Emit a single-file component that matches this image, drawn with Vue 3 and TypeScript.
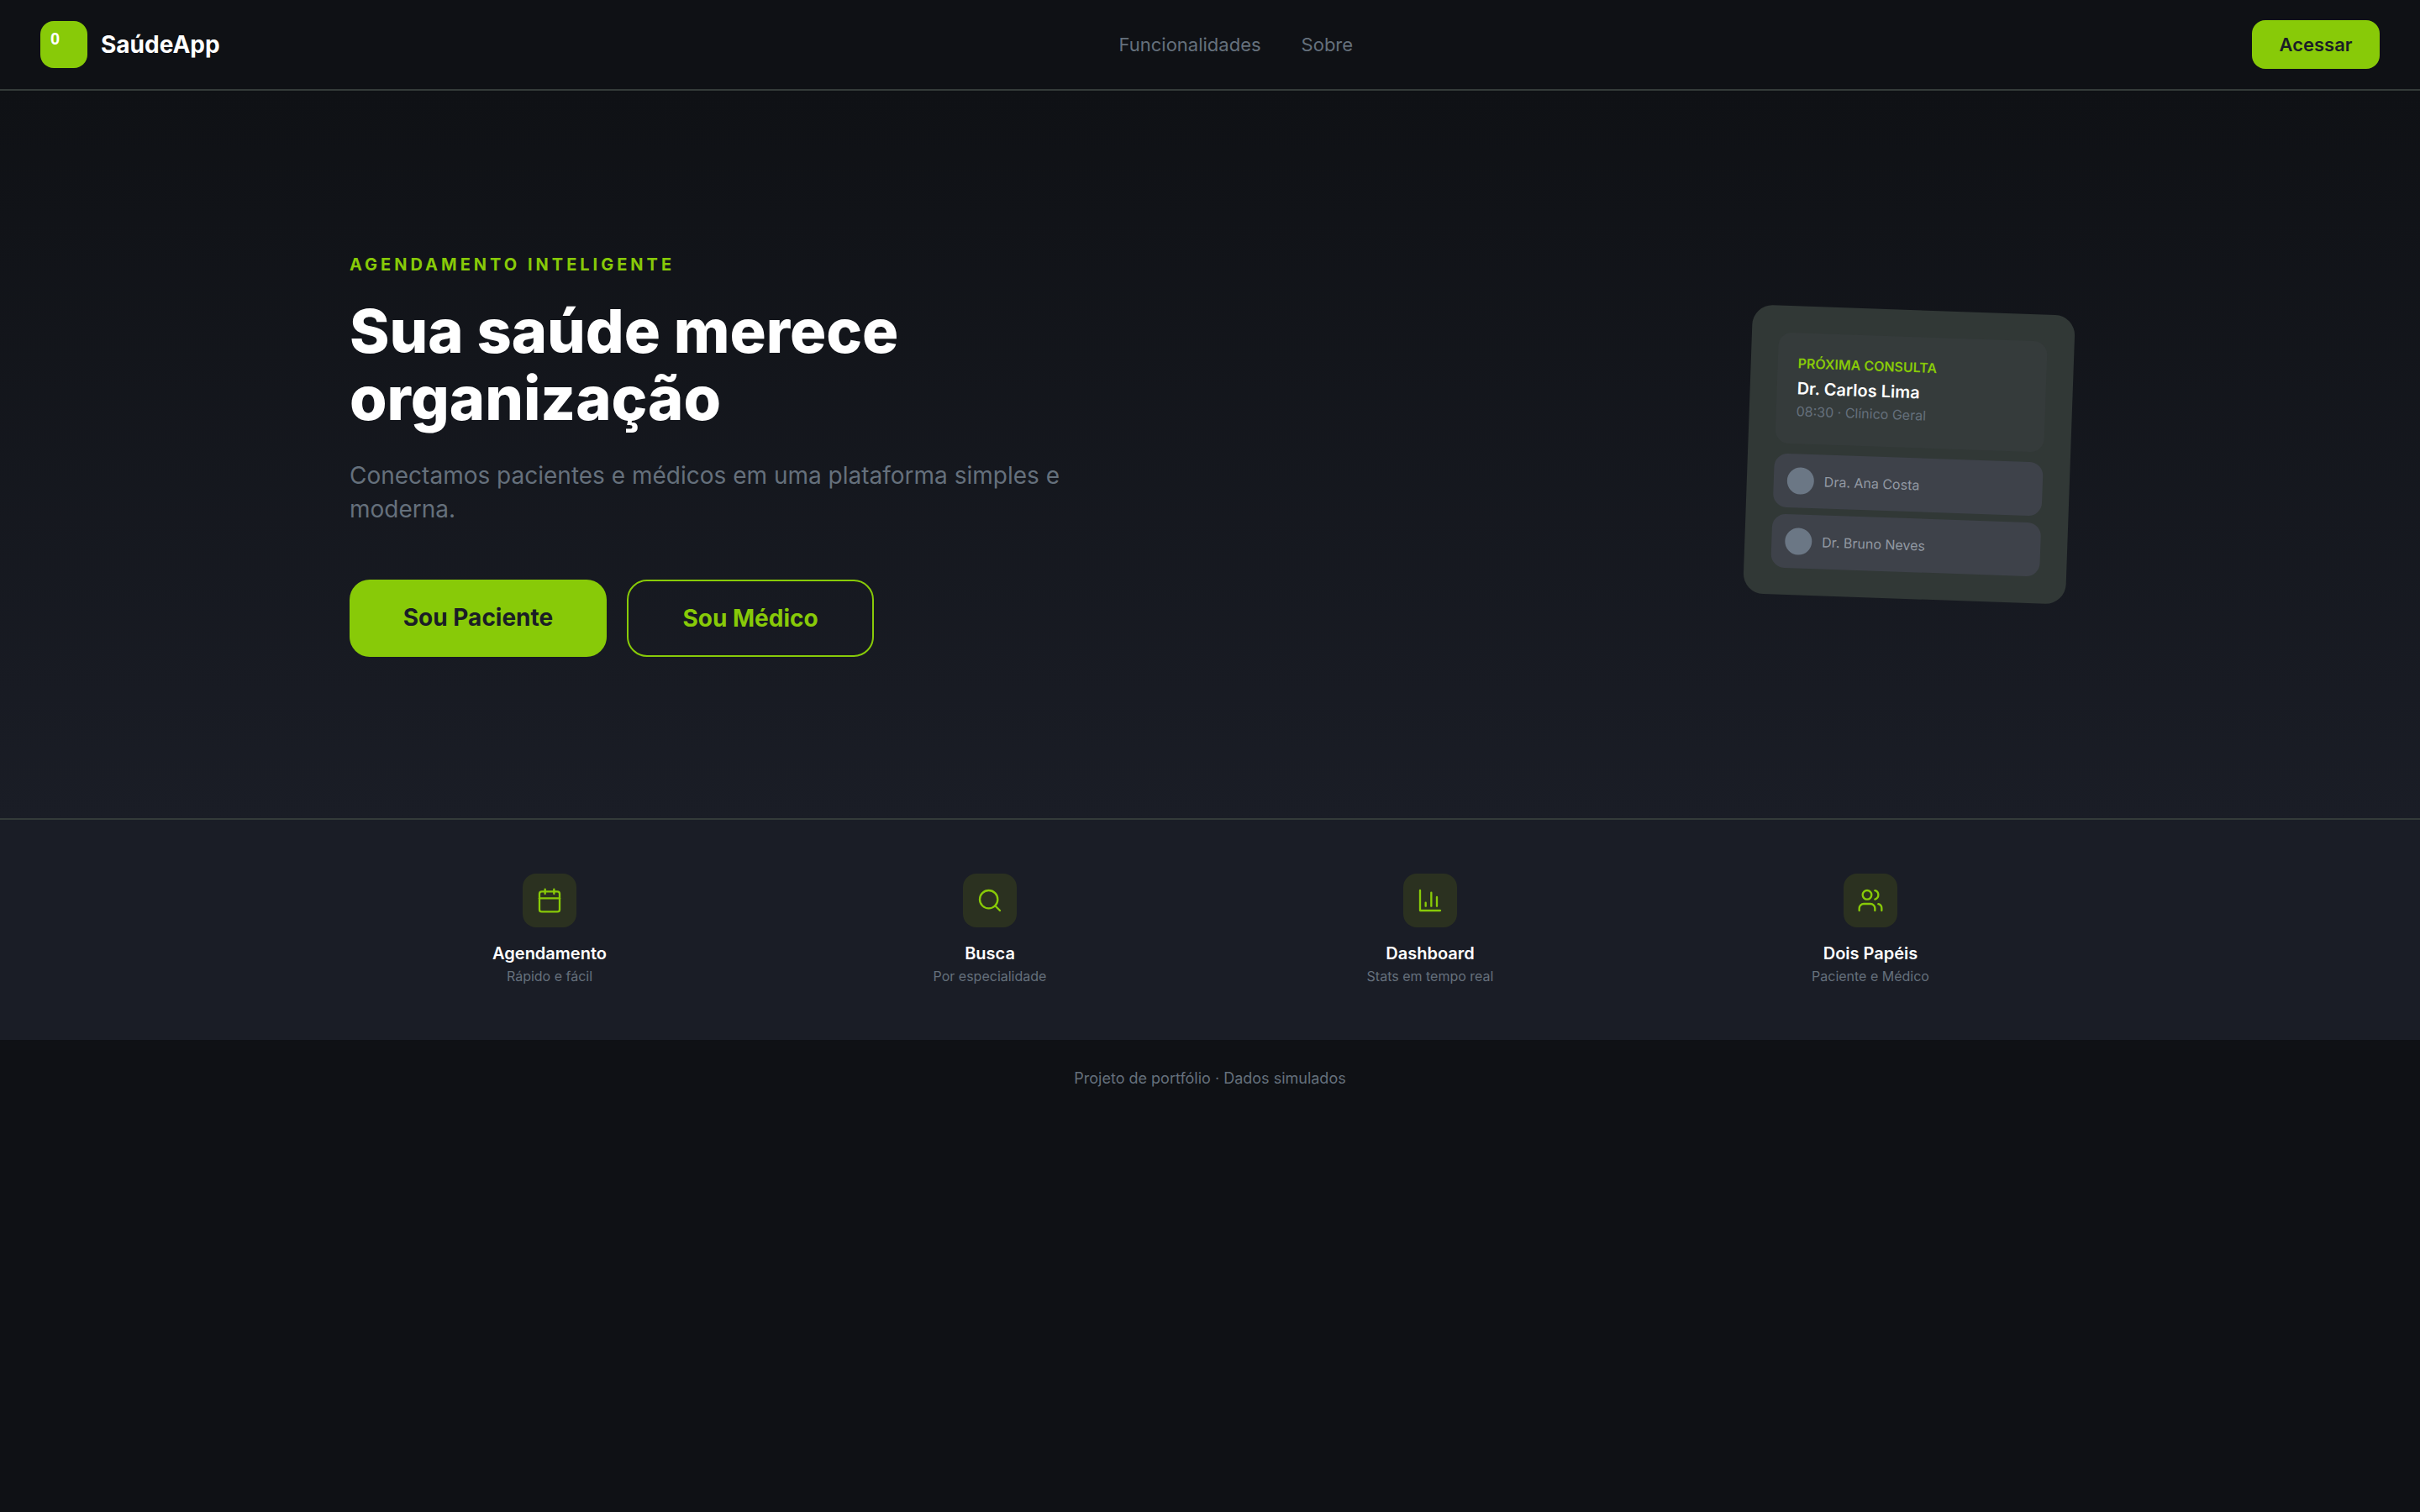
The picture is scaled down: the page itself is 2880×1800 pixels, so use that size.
<script setup lang="ts">
type Feature = {
  title: string
  text: string
  paths: string[]
}

const features: Feature[] = [
  {
    title: 'Agendamento',
    text: 'Rápido e fácil',
    paths: ['M8 2v4', 'M16 2v4', 'M5 4h14a2 2 0 0 1 2 2v14a2 2 0 0 1-2 2H5a2 2 0 0 1-2-2V6a2 2 0 0 1 2-2z', 'M3 10h18'],
  },
  {
    title: 'Busca',
    text: 'Por especialidade',
    paths: ['M19 11a8 8 0 1 1-16 0 8 8 0 0 1 16 0z', 'm21 21-4.3-4.3'],
  },
  {
    title: 'Dashboard',
    text: 'Stats em tempo real',
    paths: ['M3 3v18h18', 'M18 17V9', 'M13 17V5', 'M8 17v-3'],
  },
  {
    title: 'Dois Papéis',
    text: 'Paciente e Médico',
    paths: [
      'M16 21v-2a4 4 0 0 0-4-4H6a4 4 0 0 0-4 4v2',
      'M13 7a4 4 0 1 1-8 0 4 4 0 0 1 8 0z',
      'M22 21v-2a4 4 0 0 0-3-3.87',
      'M16 3.13a4 4 0 0 1 0 7.75',
    ],
  },
]

const doctors = ['Dra. Ana Costa', 'Dr. Bruno Neves']
</script>

<template>
  <div class="page">
    <header class="topbar">
      <div class="brand">
        <span class="brand-mark">0</span>
        <span class="brand-name">SaúdeApp</span>
      </div>
      <nav class="nav">
        <a>Funcionalidades</a>
        <a>Sobre</a>
      </nav>
      <button type="button" class="access-btn">Acessar</button>
    </header>

    <section class="hero">
      <div class="hero-inner">
        <div class="hero-copy">
          <p class="eyebrow">AGENDAMENTO INTELIGENTE</p>
          <h1>Sua saúde merece organização</h1>
          <p class="lead">Conectamos pacientes e médicos em uma plataforma simples e moderna.</p>
          <div class="hero-actions">
            <button type="button" class="btn btn-primary">Sou Paciente</button>
            <button type="button" class="btn btn-outline">Sou Médico</button>
          </div>
        </div>

        <div class="preview-card">
          <div class="next-visit">
            <p class="next-label">PRÓXIMA CONSULTA</p>
            <p class="next-name">Dr. Carlos Lima</p>
            <p class="next-meta">08:30 · Clínico Geral</p>
          </div>
          <div v-for="doctor in doctors" :key="doctor" class="doctor-row">
            <span class="avatar"></span>
            <span>{{ doctor }}</span>
          </div>
        </div>
      </div>
    </section>

    <section class="features">
      <div class="features-grid">
        <div v-for="item in features" :key="item.title" class="feature">
          <span class="feature-icon">
            <svg
              width="32"
              height="32"
              viewBox="0 0 24 24"
              fill="none"
              stroke="currentColor"
              stroke-width="1.75"
              stroke-linecap="round"
              stroke-linejoin="round"
            >
              <path v-for="d in item.paths" :key="d" :d="d" />
            </svg>
          </span>
          <p class="feature-title">{{ item.title }}</p>
          <p class="feature-text">{{ item.text }}</p>
        </div>
      </div>
    </section>

    <footer class="footer">Projeto de portfólio · Dados simulados</footer>
  </div>
</template>

<style>
html,
body {
  background: #0f1115;
}
</style>

<style scoped>
.page {
  min-height: 1800px;
  background: #0f1115;
  font-family: Inter, 'Noto Sans', sans-serif;
  color: #fff;
}

p,
h1 {
  margin: 0;
}

.topbar {
  display: flex;
  align-items: center;
  justify-content: space-between;
  padding: 24px 48px;
  background: #0f1115;
  border-bottom: 2px solid #343b39;
}

.brand {
  display: flex;
  align-items: center;
  gap: 16px;
}

.brand-mark {
  width: 56px;
  height: 56px;
  box-sizing: border-box;
  padding: 9px 0 0 12px;
  border-radius: 16px;
  background: #88ca08;
  font-family: 'Liberation Sans', sans-serif;
  font-size: 20px;
  font-weight: 700;
  line-height: 24px;
  color: #fff;
}

.brand-name {
  font-size: 28px;
  font-weight: 700;
}

.nav {
  display: flex;
  gap: 48px;
  font-size: 22px;
  color: #65707c;
}

.access-btn {
  width: 152px;
  height: 58px;
  border: none;
  border-radius: 16px;
  background: #88ca08;
  font: 600 22px Inter, sans-serif;
  color: #1a1d26;
}

.hero {
  padding: 192px 0;
  background: linear-gradient(180deg, #0f1115 0%, #1a1d26 100%);
}

.hero-inner {
  display: flex;
  align-items: center;
  justify-content: space-between;
  width: 2048px;
  margin: 0 auto;
}

.hero-copy {
  width: 896px;
}

.eyebrow {
  font-size: 20px;
  font-weight: 700;
  line-height: 30px;
  letter-spacing: 4px;
  color: #88ca08;
}

h1 {
  margin-top: 24px;
  font-size: 72px;
  font-weight: 800;
  line-height: 80px;
}

.lead {
  margin-top: 32px;
  font-size: 28px;
  line-height: 40px;
  color: #65707c;
}

.hero-actions {
  display: flex;
  gap: 24px;
  margin-top: 64px;
}

.btn {
  height: 92px;
  box-sizing: border-box;
  border-radius: 24px;
  font: 700 28px Inter, sans-serif;
}

.btn-primary {
  width: 306px;
  padding-bottom: 4px;
  border: none;
  background: #88ca08;
  color: #1a1d26;
}

.btn-outline {
  width: 294px;
  border: 2px solid #88ca08;
  background: transparent;
  color: #88ca08;
}

.preview-card {
  display: flex;
  flex-direction: column;
  gap: 8px;
  width: 384px;
  box-sizing: border-box;
  padding: 32px;
  border-radius: 24px;
  background: #313836;
  transform: rotate(2deg);
}

.next-visit {
  height: 132px;
  box-sizing: border-box;
  margin-bottom: 4px;
  padding: 24px 24px 0;
  border-radius: 16px;
  background: #353b3b;
}

.next-label {
  font-size: 16px;
  font-weight: 600;
  line-height: 24px;
  color: #88ca08;
}

.next-name {
  margin-top: 4px;
  font-size: 20px;
  font-weight: 600;
  line-height: 28px;
}

.next-meta {
  margin-top: 1px;
  font-size: 16px;
  line-height: 24px;
  color: #65707c;
}

.doctor-row {
  display: flex;
  align-items: center;
  gap: 12px;
  height: 64px;
  box-sizing: border-box;
  padding: 0 16px;
  border-radius: 16px;
  background: #3e424a;
  font-size: 16px;
  color: #9299a3;
}

.avatar {
  width: 32px;
  height: 32px;
  border-radius: 50%;
  background: #6b7785;
}

.features {
  padding: 64px 0;
  background: #1a1d26;
  border-top: 2px solid #343b39;
}

.features-grid {
  display: grid;
  grid-template-columns: repeat(4, 1fr);
  gap: 48px;
  width: 2048px;
  margin: 0 auto;
}

.feature {
  display: flex;
  flex-direction: column;
  align-items: center;
}

.feature-icon {
  display: flex;
  align-items: center;
  justify-content: center;
  width: 64px;
  height: 64px;
  border-radius: 16px;
  background: #2b3120;
  color: #88ca08;
}

.feature-title {
  margin-top: 16px;
  font-size: 20px;
  font-weight: 600;
  line-height: 30px;
}

.feature-text {
  font-size: 16px;
  line-height: 24px;
  color: #65707c;
}

.footer {
  padding: 32px 0;
  text-align: center;
  font-size: 18px;
  line-height: 28px;
  color: #65707c;
}
</style>
